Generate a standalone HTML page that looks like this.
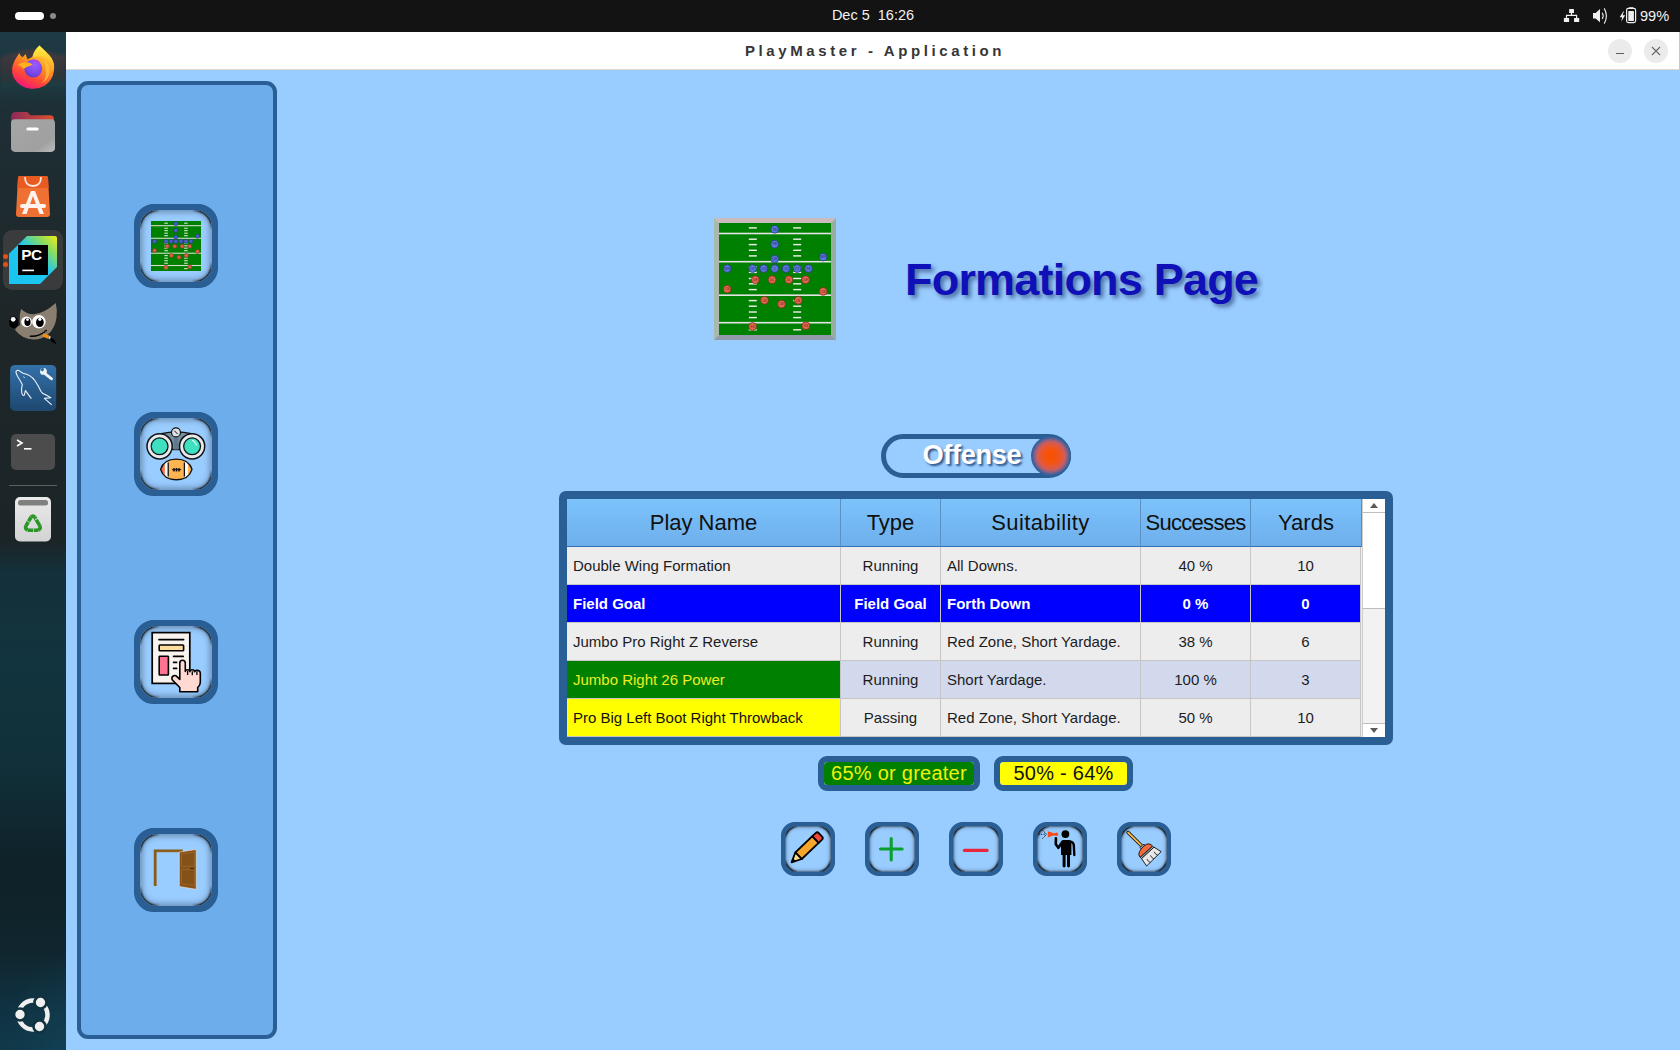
<!DOCTYPE html>
<html><head><meta charset="utf-8">
<style>
*{margin:0;padding:0;box-sizing:border-box}
html,body{width:1680px;height:1050px;overflow:hidden;background:#99ccff;font-family:"Liberation Sans",sans-serif}
.abs{position:absolute}
#topbar{left:0;top:0;width:1680px;height:32px;background:#131313}
#dock{left:0;top:32px;width:66px;height:1018px;background:radial-gradient(ellipse 60px 90px at 66px 1010px,rgba(20,70,90,.5),rgba(0,0,0,0)),linear-gradient(180deg,#1f3b46 0%,#1e2f35 8%,#1e2628 28%,#1b2527 50%,#14303a 53%,#12343e 62%,#113039 72%,#0f2129 82%,#10252d 90%,#0f3242 96%,#10394a 100%)}
#titlebar{left:66px;top:32px;width:1614px;height:38px;background:#fff;border-bottom:1px solid #ddd8d2}
#content{left:66px;top:70px;width:1614px;height:980px;background:#99ccff}
#sidebar{left:77px;top:81px;width:200px;height:958px;background:#6eadeb;border:4px solid #295f94;border-radius:11px}
.sbtn{position:absolute;width:84px;height:84px;border:6px solid #295f94;border-radius:20px;background:#99ccff}
.sbtn::before,.bbtn::before{content:'';position:absolute;left:0;top:0;right:0;bottom:0;border-radius:17px;box-shadow:0 0 0 6px #295f94,inset 0 0 6px 2px rgba(0,0,0,.33)}
.bbtn::before{border-radius:12px;box-shadow:0 0 0 4px #295f94,inset 0 0 2px 1px rgba(0,0,0,.45),inset 0 0 5px 1px rgba(0,0,0,.2)}
.sbtn::after,.bbtn::after{content:'';position:absolute;left:0;top:0;right:0;bottom:0;border-radius:17px;box-shadow:inset 0 0 2px 1.5px rgba(0,0,0,.85);-webkit-mask:linear-gradient(90deg,#000 12px,transparent 20px,transparent calc(100% - 20px),#000 calc(100% - 12px)),linear-gradient(180deg,#000 12px,transparent 20px,transparent calc(100% - 20px),#000 calc(100% - 12px));-webkit-mask-composite:source-in;mask-composite:intersect}
.bbtn::after{border-radius:12px;-webkit-mask:linear-gradient(90deg,#000 7px,transparent 13px,transparent calc(100% - 13px),#000 calc(100% - 7px)),linear-gradient(180deg,#000 7px,transparent 13px,transparent calc(100% - 13px),#000 calc(100% - 7px));-webkit-mask-composite:source-in;mask-composite:intersect}
.bbtn{position:absolute;top:822px;width:54px;height:54px;border:4px solid #295f94;border-radius:14px;background:#99ccff}
#title{left:905px;top:254px;font-size:45px;line-height:52px;letter-spacing:-.8px;font-weight:bold;color:#1010b8;text-shadow:3px 3px 4px rgba(30,50,100,.6);white-space:nowrap}
#toggle{left:881px;top:434px;width:190px;height:44px;border:5px solid #295f94;border-radius:22px}
#tbl{left:559px;top:491px;width:834px;height:254px;border:8px solid #295f94;border-radius:7px;background:#ededee;overflow:hidden}

.th{position:absolute;top:0;height:48px;border-right:1px solid #5c8fc2;border-bottom:1px solid #2f72b4;background:linear-gradient(180deg,#7cc3fb 0%,#74b8f3 55%,#6eafeb 100%);line-height:48px;text-align:center;font-size:22px;color:#101010;white-space:nowrap}
.td{position:absolute;height:38px;border-right:1px solid #c6c6c6;border-bottom:1px solid #c6c6c6;line-height:37px;font-size:15px;padding-left:6px;color:#1c1c1c;white-space:nowrap;overflow:hidden;background:#ededee}
.td.c{text-align:center;padding-left:0}
.td.sel{background:#0000ff;color:#fff;font-weight:bold}
.td.alt{background:#d3d9ed}
.td.g{background:#008000;color:#eeee22}
.td.y{background:#ffff00;color:#111}
#sb{position:absolute;left:795px;top:0;width:23px;height:238px;background:#f2f2f2;border-left:1px solid #d2cdc8}
#sb .up,#sb .dn{position:absolute;left:0;width:22px;height:14px;background:#fff}
#sb .up{top:0;border-bottom:1px solid #bdbdbd}
#sb .dn{bottom:0;border-top:1px solid #bdbdbd}
#sb .hd{position:absolute;left:0;top:14px;width:22px;height:96px;background:#fff;border-bottom:1px solid #bdbdbd}
#sb .tri{position:absolute;left:8px;width:0;height:0;border-left:4px solid transparent;border-right:4px solid transparent}

#clock{left:820px;top:7px;width:106px;text-align:center;color:#f2f2f2;font-size:14.5px;white-space:pre;line-height:16px}
#pct{left:1640px;top:8px;color:#f2f2f2;font-size:14.6px;line-height:16px}
#apptitle{left:745px;top:42px;color:#363636;font-size:15px;font-weight:bold;letter-spacing:3.6px;white-space:nowrap;line-height:17px}
.wbtn{position:absolute;top:39px;width:24px;height:24px;border-radius:50%;background:#ebebeb}
.di{position:absolute}

#offtxt{left:922.5px;top:440px;letter-spacing:-.35px;color:#fff;font-size:27.2px;font-weight:bold;text-shadow:2px 2px 2px rgba(20,50,100,.75);white-space:nowrap;line-height:30px}
#knob{left:1031px;top:436px;width:40px;height:40px;border-radius:50%;background:radial-gradient(circle closest-side,#f65000 0%,#f45310 33%,#e4583a 57%,#cc5d5c 70%,#8a6084 82%,#46609a 92%,#2a5f94 100%)}
.badge{position:absolute;top:756px;height:35px;border:6px solid #295f94;border-radius:9px;font-size:20px;text-align:center;line-height:23px;white-space:nowrap;letter-spacing:.25px}
</style></head>
<body>
<div id="topbar" class="abs">
<div class="abs" style="left:15px;top:12px;width:29px;height:8px;border-radius:4px;background:#fff"></div>
<div class="abs" style="left:50px;top:13px;width:6px;height:6px;border-radius:50%;background:#8a8a8a"></div>
<div id="clock" class="abs">Dec 5  16:26</div>
<svg class="abs" style="left:1555px;top:0" width="85" height="32" viewBox="1555 0 85 32">
<rect x="1569.1" y="8.9" width="4.9" height="4.1" rx=".6" fill="#f0f0f0"/><rect x="1563.9" y="17.9" width="5.2" height="4.1" rx=".6" fill="#f0f0f0"/><rect x="1574" y="17.9" width="5.2" height="4.1" rx=".6" fill="#f0f0f0"/>
<path d="M1571.5 13v2.3M1566.5 17.9v-2.6h10.1v2.6" stroke="#f0f0f0" stroke-width="1.2" fill="none"/>
<path d="M1593 13h2.6l4.4-4.1v13.4l-4.4-3.7H1593z" fill="#f0f0f0"/>
<path d="M1602.2 12.8q2 3 0 6.2M1604.2 8.4q4.4 7.6 0 15.2" stroke="#f0f0f0" stroke-width="1.1" fill="none"/>
<path d="M1623.4 11.2L1619.7 17.2h2.5l-1 4.4 4-6.4h-2.5l1.2-4z" fill="#f0f0f0"/>
<rect x="1626.6" y="8.4" width="9" height="14.2" rx="1.8" stroke="#f0f0f0" stroke-width="1.2" fill="none"/>
<rect x="1628.7" y="7.2" width="4.8" height="1.6" rx=".5" fill="#f0f0f0"/>
<rect x="1628.3" y="11.1" width="5.6" height="10" rx=".6" fill="#eeeeee"/>
</svg>
<div id="pct" class="abs">99%</div>
</div>
<div id="dock" class="abs">
<svg class="abs" style="left:0;top:0;filter:blur(1.5px)" width="66" height="140" viewBox="0 0 66 140">
<defs><linearGradient id="mtn" x1="0" y1="0" x2="0" y2="1"><stop offset="0" stop-color="#4a3c40" stop-opacity=".85"/><stop offset=".6" stop-color="#3a3538" stop-opacity=".75"/><stop offset="1" stop-color="#2a3a3c" stop-opacity=".5"/></linearGradient>
<linearGradient id="tl" x1="0" y1="0" x2="0" y2="1"><stop offset="0" stop-color="#1f4048" stop-opacity=".9"/><stop offset="1" stop-color="#1a2c30" stop-opacity="0"/></linearGradient></defs>
<path d="M0 26Q14 20 26 18 40 16 52 21 60 24 66 22V50Q40 47 0 52z" fill="url(#mtn)"/>
<path d="M0 52Q40 47 66 50V78Q40 74 0 80z" fill="url(#tl)"/>
</svg>
<!-- firefox -->
<svg class="di" style="left:0;top:10px" width="66" height="50" viewBox="0 42 66 50">
<defs>
<linearGradient id="ffb" x1=".75" y1=".1" x2=".3" y2="1"><stop offset="0" stop-color="#ffde3c"/><stop offset=".35" stop-color="#ff9a22"/><stop offset=".7" stop-color="#ff4a36"/><stop offset="1" stop-color="#f0127c"/></linearGradient>
<linearGradient id="ffy" x1=".5" y1="0" x2=".5" y2="1"><stop offset="0" stop-color="#fff044"/><stop offset="1" stop-color="#ffb428"/></linearGradient>
<radialGradient id="ffp" cx="60%" cy="30%" r="80%"><stop offset="0" stop-color="#9b5cff"/><stop offset=".6" stop-color="#7a48e8"/><stop offset="1" stop-color="#5b36c4"/></radialGradient>
</defs>
<path d="M14.6 60.5L19.4 53 21.5 58.5 25.6 53.9 27.5 59.5Q30 57.5 32.5 57L39.4 45.6Q45 51 49.2 55.3 55 61 54 70 53 80 45 85.5 38 89.5 31 88.7 20 87.5 14.5 79 11 72.5 12.5 66z" fill="url(#ffb)"/>
<path d="M32.3 57.2Q34 50 39.4 45.6 45 51 49.2 55.3 53.8 60.5 53.8 67 52 61 46.5 58 41 55.5 32.3 57.2z" fill="url(#ffy)"/>
<path d="M44 60q6 4 5.5 12-1 8-8 11.5 5-5 4.5-11.5-.3-6-2-12z" fill="#ffc43a" opacity=".75"/>
<circle cx="33.2" cy="68.6" r="9" fill="url(#ffp)"/>
<path d="M31.6 59.8q5-.8 8.8 2l-2.2-.2q-2 .8-.2 2.4z" fill="#b040f0"/>
<path d="M18 64.5q3-2 8-2.2 3.5 0 6.8 2.2l-2 1q-4 .8-6.8 3.2-2-.5-2.8-2.2-2.4-.4-3.2-2z" fill="#ffb21c"/>
<path d="M19.6 56q3 2 6 3.5" stroke="#ff9a18" stroke-width="1.2" fill="none"/>
</svg>
<!-- files -->
<svg class="di" style="left:10px;top:79px" width="45" height="41" viewBox="0 0 44 40">
<defs><linearGradient id="ftab" x1="0" x2="1"><stop offset="0" stop-color="#8c2a5a"/><stop offset="1" stop-color="#e0502a"/></linearGradient>
<linearGradient id="fbody" x1="0" y1="0" x2="1" y2="1"><stop offset="0" stop-color="#a6a6a6"/><stop offset=".75" stop-color="#a0a0a0"/><stop offset="1" stop-color="#bdbdbd"/></linearGradient></defs>
<path d="M1 6q0-5 5-5h11l3 3h19q4 0 4 4v10H1z" fill="url(#ftab)"/>
<rect x="1" y="8" width="43" height="32" rx="4" fill="url(#fbody)"/>
<rect x="16" y="16" width="12" height="3" rx="1.5" fill="#fff"/>
</svg>
<!-- app center -->
<svg class="di" style="left:15px;top:143px" width="36" height="42" viewBox="0 0 36 42">
<path d="M3 3q0-2 2-2h26q2 0 2 2l2 36q0 3-3 3H4q-3 0-3-3z" fill="#f07033"/>
<path d="M3 3q0-2 2-2h26q2 0 2 2l.6 10H2.4z" fill="#e95a20"/>
<path d="M10 2q0 9 8 9t8-9" stroke="#f5e6e0" stroke-width="1.8" fill="none"/>
<path d="M7 39L16 16h4l9 23h-4.5L18 21l-6.5 18z" fill="#fff3ee"/>
<rect x="5" y="29" width="26" height="4" rx="2" fill="#fff3ee"/>
</svg>
<!-- pycharm -->
<div class="abs" style="left:3px;top:198px;width:60px;height:60px;border-radius:9px;background:#3a3b3c"></div>
<div class="abs" style="left:3px;top:222px;width:5px;height:5px;border-radius:50%;background:#e2501e"></div>
<div class="abs" style="left:3px;top:230px;width:5px;height:5px;border-radius:50%;background:#e2501e"></div>
<svg class="di" style="left:9px;top:204px" width="48" height="48" viewBox="0 0 48 48">
<defs><linearGradient id="pcg" x1="0" y1="1" x2="1" y2="0"><stop offset="0" stop-color="#19c3f2"/><stop offset=".55" stop-color="#1fc8ee"/><stop offset=".8" stop-color="#8fdc5a"/><stop offset="1" stop-color="#f2ee18"/></linearGradient></defs>
<path d="M18 0H46Q48 0 48 2V31L31 48H0V17.7z" fill="url(#pcg)"/>
<rect x="9" y="9" width="30" height="30" fill="#000"/>
<text x="12.2" y="24.4" font-family="Liberation Sans" font-size="15.4" font-weight="bold" fill="#fff" letter-spacing="-.4">PC</text>
<rect x="13.3" y="33.6" width="11.7" height="1.6" fill="#fff"/>
</svg>
<!-- gimp -->
<svg class="di" style="left:0;top:266px" width="66" height="52" viewBox="0 298 66 52">
<path d="M21.1 309.1Q27 314.5 33.7 314.3 44 313.5 55.8 303 57.5 310 56.5 317.8 55 328 48.6 333.7 42 339.6 33.7 339.6 22 339 14.9 329.7 16 327 20 325 19 316 21.1 309.1z" fill="#8a7e70"/>
<ellipse cx="13.7" cy="322.3" rx="4.7" ry="5.9" fill="#000"/><circle cx="13.2" cy="319.3" r="2.4" fill="#fff"/>
<circle cx="26.6" cy="321.8" r="5.4" fill="#fff"/><ellipse cx="27.5" cy="322" rx="3.1" ry="3.9" fill="#000"/><circle cx="27.5" cy="319.6" r="1.4" fill="#fff"/>
<circle cx="38.9" cy="321.8" r="6.8" fill="#fff"/><ellipse cx="39.9" cy="322.4" rx="3.9" ry="4.6" fill="#000"/><circle cx="39.9" cy="319.3" r="1.6" fill="#fff"/>
<path d="M29.8 336.2Q38 337 45.3 331.5" stroke="#000" stroke-width="1.5" fill="none"/>
<path d="M44 331l2.6-1.4.5 1.8z" fill="#000"/>
<path d="M42.8 334.8l6 2.4" stroke="#f08c10" stroke-width="3.4"/>
<path d="M48.8 337.2l1.8.8" stroke="#c8d0d8" stroke-width="2.6"/>
<path d="M50.5 337.5q3 1 4.5 3.5t1.5 3.5q-3-1.5-5-3-1.5-1.5-1-4z" fill="#000"/>
</svg>
<!-- mysql -->
<svg class="di" style="left:0;top:328px" width="66" height="54" viewBox="0 360 66 54">
<defs><linearGradient id="myg" x1="0" y1="0" x2="0" y2="1"><stop offset="0" stop-color="#3371aa"/><stop offset="1" stop-color="#1d4870"/></linearGradient></defs>
<rect x="10.1" y="364.9" width="46.1" height="46" rx="5" fill="url(#myg)"/>
<path d="M15.8 372.1Q16.5 369.8 19 370.6L23 373.2Q31 374.5 35 380.8Q38.5 386 41 391.5Q42.5 394 45.3 394.6L50.8 397.8 44.3 398.4 51.8 404.8" stroke="#eef2f6" stroke-width="1.1" fill="none" stroke-linejoin="round"/>
<path d="M15.8 372.1Q17 376 19.5 379.5L22.3 384.5Q20.8 389.5 21.9 393.4Q23 396.3 24.3 395.2L25.4 390.6 31.4 398.6" stroke="#eef2f6" stroke-width="1.1" fill="none" stroke-linejoin="round"/>
<path d="M23.6 376.6l.9 1.2" stroke="#eef2f6" stroke-width="1"/>
<path d="M45 373.6l6.6 5.2" stroke="#eef2f6" stroke-width="2.8" stroke-linecap="round"/>
<circle cx="43.4" cy="371.4" r="3.4" fill="#eef2f6"/><path d="M40.2 370.2l2.6 1.2 1.4-1.8-1.5-2.8z" fill="#3170a6"/>
</svg>
<!-- terminal -->
<div class="abs" style="left:11px;top:402px;width:44px;height:36px;border-radius:5px;background:#4c4c4c"></div>
<svg class="di" style="left:15px;top:406px" width="20" height="14" viewBox="0 0 20 14"><path d="M2 2l5 3-5 3" stroke="#fff" stroke-width="1.6" fill="none"/><rect x="9" y="10" width="7.5" height="1.6" fill="#fff"/></svg>
<div class="abs" style="left:9px;top:453px;width:48px;height:1px;background:#5c5f60"></div>
<!-- trash -->
<svg class="di" style="left:15px;top:465px" width="36" height="45" viewBox="0 0 36 45">
<defs><linearGradient id="trg" x1="0" y1="0" x2="0" y2="1"><stop offset="0" stop-color="#eaeaea"/><stop offset="1" stop-color="#d3d3d3"/></linearGradient></defs>
<rect x="0" y="0" width="36" height="44.5" rx="5" fill="url(#trg)"/>
<rect x="3" y="3" width="30" height="5.5" rx="2.5" fill="#808080"/>
<g transform="translate(17.9 27.6)">
<path d="M1.8-7.6L6.9 1.2M5.2 5.6H-5.2M-6.9 1.2L-1.8-7.6" stroke="#2a9626" stroke-width="3.6" stroke-linecap="butt" fill="none"/>
<path d="M-1.8-7.6Q0-9.6 1.8-7.6M6.9 1.2Q8.2 4.2 5.2 5.6M-5.2 5.6Q-8.2 4.2-6.9 1.2" stroke="#2a9626" stroke-width="3.6" fill="none"/>
<path d="M2.2-4.6l2.8-1.6M1 3.6v3.8M-3.4-2l-3.2-1.8" stroke="#dadada" stroke-width="1.3" fill="none"/><path d="M2.2-4.6l1.6 3.2 1.4-4zM1 3.6l2.8 2-2.8 2zM-3.4-2l-3.6 1 .4-2.6z" fill="#2a9626"/>
</g></svg>
<!-- ubuntu -->
<svg class="di" style="left:14px;top:964px" width="38" height="38" viewBox="0 0 38 38">
<circle cx="19" cy="19" r="14.5" stroke="#f0f0f0" stroke-width="4.5" fill="none"/>
<g stroke="#11323f" stroke-width="2.6"><circle cx="6" cy="18.5" r="6" fill="#f0f0f0"/><circle cx="26.5" cy="6.5" r="6" fill="#f0f0f0"/><circle cx="25.5" cy="30.5" r="6" fill="#f0f0f0"/></g>
</svg>
</div>
<div id="titlebar" class="abs"></div>
<div id="apptitle" class="abs">PlayMaster - Application</div>
<div class="wbtn" style="left:1608px"><div class="abs" style="left:8px;top:14px;width:8px;height:1.3px;background:#5e5e5e"></div></div>
<div class="wbtn" style="left:1644px"><svg class="abs" style="left:6px;top:6px" width="12" height="12" viewBox="0 0 12 12"><path d="M2 2L10 10M10 2L2 10" stroke="#666" stroke-width="1.1"/></svg></div>
<div class="abs" style="left:1679px;top:32px;width:1px;height:38px;background:#c8c8c8"></div>
<div id="content" class="abs"></div>
<div id="sidebar" class="abs"></div>
<div class="sbtn" style="left:134px;top:204px"></div>
<svg class="abs" style="left:151px;top:221px" width="50" height="50" viewBox="0 0 112 112"><use href="#fld2" x="0" y="0" width="112" height="112"/></svg>
<div class="sbtn" style="left:134px;top:412px"></div>
<svg class="abs" style="left:134px;top:412px" width="84" height="84" viewBox="134 412 84 84">
<defs><clipPath id="fbc"><path d="M160.6 469.4C162.8 462.2 169 459.1 176.3 459.1S189.8 462.2 192 469.4C189.8 476.6 183.6 479.7 176.3 479.7S162.8 476.6 160.6 469.4z"/></clipPath></defs>
<path d="M161.5 433.6Q176 430 191.5 433.6L189 445 178.3 449.6H173.7L163 445z" fill="#7890a0" stroke="#111" stroke-width="1.2" stroke-linejoin="round"/>
<path d="M173.7 436h4.6v13.6h-4.6z" fill="#5f7a8c"/>
<circle cx="159.6" cy="446.3" r="12.6" fill="#e6eaee" stroke="#111" stroke-width="1.5"/>
<circle cx="159.6" cy="446.3" r="8.4" fill="#3ee0c0" stroke="#111" stroke-width="1.3"/>
<path d="M153.2 441.5a8 8 0 0 0 3.5 12.3 8.4 8.4 0 0 1-3.5-12.3z" fill="#14b896"/>
<circle cx="192.1" cy="446.3" r="12.6" fill="#e6eaee" stroke="#111" stroke-width="1.5"/>
<circle cx="192.1" cy="446.3" r="8.4" fill="#3ee0c0" stroke="#111" stroke-width="1.3"/>
<path d="M185.7 441.5a8 8 0 0 0 3.5 12.3 8.4 8.4 0 0 1-3.5-12.3z" fill="#14b896"/>
<path d="M192.6 440.4l.9.5M194.4 441.6l.6.8M195.8 443.4l.5 1.6" stroke="#fff" stroke-width="1.1" stroke-linecap="round"/>
<circle cx="176" cy="432.4" r="4.5" fill="#dde2e6" stroke="#111" stroke-width="1.2"/>
<path d="M174.3 430.7l3.4 3.4" stroke="#111" stroke-width="1"/>
<g clip-path="url(#fbc)">
<rect x="158" y="456" width="36" height="26" fill="#ffb452"/>
<path d="M158 456h7v26h-7z" fill="#f4744a"/>
<path d="M164.8 456h3.4v26h-3.4zM184.4 456h3.4v26h-3.4z" fill="#fff"/>
</g>
<path d="M168.2 462.4v14M184.4 462.4v14" stroke="#111" stroke-width="1.3"/>
<path d="M160.6 469.4C162.8 462.2 169 459.1 176.3 459.1S189.8 462.2 192 469.4C189.8 476.6 183.6 479.7 176.3 479.7S162.8 476.6 160.6 469.4z" fill="none" stroke="#111" stroke-width="1.4"/>
<path d="M172 469.7h9.2" stroke="#111" stroke-width="1"/>
<path d="M174 468v3.4M176.5 468v3.4M179 468v3.4" stroke="#111" stroke-width="1.5"/>
</svg>
<div class="sbtn" style="left:134px;top:620px"></div>
<svg class="abs" style="left:134px;top:620px" width="84" height="84" viewBox="134 620 84 84">
<rect x="152.2" y="632.6" width="37.6" height="50.8" fill="#f8f3ef" stroke="#000" stroke-width="1.7"/>
<path d="M159 639.6h24.6" stroke="#000" stroke-width="1.7" stroke-linecap="round"/>
<rect x="159.2" y="645" width="24.4" height="5.8" rx=".8" fill="#fddc9e" stroke="#000" stroke-width="1.6"/>
<rect x="159.2" y="656.2" width="9.2" height="18.8" rx=".6" fill="#ff7391" stroke="#000" stroke-width="1.6"/>
<path d="M173.6 656.4h9.6M173.6 662.4h3M173.6 668.4h3" stroke="#000" stroke-width="1.7" stroke-linecap="round"/>
<path d="M179.8 691.7V687.5L172.6 680.2Q170.8 677.6 173.2 676Q175.2 674.8 177 676.6L179.8 679.4V663Q179.8 660.2 182.5 660.2T185.3 663V671.4Q185.5 669.8 187.6 669.8Q189.6 669.8 189.9 671.6Q190.4 669.8 192.3 669.8Q194.3 669.8 194.6 671.8Q195.1 670.4 196.9 670.4Q200.3 670.4 200.3 673.6V682.4Q200.3 685 197.7 687.6V691.7z" fill="#ffd9d2" stroke="#000" stroke-width="1.6" stroke-linejoin="round"/>
<path d="M187.6 671v4M192.3 671.2v4M196.9 671.5v3.6" stroke="#000" stroke-width="1.3"/>
</svg>
<div class="sbtn" style="left:134px;top:828px"></div>
<svg class="abs" style="left:134px;top:828px" width="84" height="84" viewBox="134 828 84 84">
<path d="M153.8 849.4h29v2.6h-26.2V886h-2.8z" fill="#8a5a1c"/>
<path d="M157 852h22" stroke="#a87038" stroke-width=".8" stroke-dasharray="1.5 1.2"/>
<path d="M179.3 852l16.9-2.5V889.3l-16.9-2.8z" fill="#8a5216" stroke="#fff6e0" stroke-width=".5"/>
<path d="M181.5 854l13-1.8v14l-13 .2z" fill="#835218" stroke="#9c6a32" stroke-width=".7"/>
<path d="M181.5 869.5l13 .3v15.7l-13-1.8z" fill="#835218" stroke="#9c6a32" stroke-width=".7"/>
<path d="M190.5 868.5h3" stroke="#2a1a08" stroke-width="1.1"/>
</svg>
<div id="title" class="abs">Formations Page</div>
<div id="toggle" class="abs"></div>
<div id="knob" class="abs"></div>
<div id="offtxt" class="abs">Offense</div>
<svg class="abs" style="left:714px;top:218px" width="122" height="122" viewBox="0 0 122 122">
<defs><symbol id="fld" viewBox="0 0 112 112"><rect x="0" y="0" width="112" height="112" fill="#008000"/>
<rect x="0" y="9.7" width="112" height="1.6" fill="#e4e4e4"/>
<rect x="0" y="37.9" width="112" height="1.6" fill="#e4e4e4"/>
<rect x="0" y="71.4" width="112" height="1.6" fill="#e4e4e4"/>
<rect x="0" y="98.9" width="112" height="1.6" fill="#e4e4e4"/>
<rect x="29.8" y="4.2" width="8" height="1.4" fill="#f0f0f0"/>
<rect x="74.2" y="4.2" width="8" height="1.4" fill="#f0f0f0"/>
<rect x="29.8" y="15.5" width="8" height="1.4" fill="#f0f0f0"/>
<rect x="74.2" y="15.5" width="8" height="1.4" fill="#f0f0f0"/>
<rect x="29.8" y="20.9" width="8" height="1.4" fill="#f0f0f0"/>
<rect x="74.2" y="20.9" width="8" height="1.4" fill="#f0f0f0"/>
<rect x="29.8" y="26.6" width="8" height="1.4" fill="#f0f0f0"/>
<rect x="74.2" y="26.6" width="8" height="1.4" fill="#f0f0f0"/>
<rect x="29.8" y="32.2" width="8" height="1.4" fill="#f0f0f0"/>
<rect x="74.2" y="32.2" width="8" height="1.4" fill="#f0f0f0"/>
<rect x="29.8" y="43.3" width="8" height="1.4" fill="#f0f0f0"/>
<rect x="74.2" y="43.3" width="8" height="1.4" fill="#f0f0f0"/>
<rect x="29.8" y="48.7" width="8" height="1.4" fill="#f0f0f0"/>
<rect x="74.2" y="48.7" width="8" height="1.4" fill="#f0f0f0"/>
<rect x="29.8" y="54.8" width="8" height="1.4" fill="#f0f0f0"/>
<rect x="74.2" y="54.8" width="8" height="1.4" fill="#f0f0f0"/>
<rect x="29.8" y="60.1" width="8" height="1.4" fill="#f0f0f0"/>
<rect x="74.2" y="60.1" width="8" height="1.4" fill="#f0f0f0"/>
<rect x="29.8" y="65.9" width="8" height="1.4" fill="#f0f0f0"/>
<rect x="74.2" y="65.9" width="8" height="1.4" fill="#f0f0f0"/>
<rect x="29.8" y="76.9" width="8" height="1.4" fill="#f0f0f0"/>
<rect x="74.2" y="76.9" width="8" height="1.4" fill="#f0f0f0"/>
<rect x="29.8" y="82.5" width="8" height="1.4" fill="#f0f0f0"/>
<rect x="74.2" y="82.5" width="8" height="1.4" fill="#f0f0f0"/>
<rect x="29.8" y="88.3" width="8" height="1.4" fill="#f0f0f0"/>
<rect x="74.2" y="88.3" width="8" height="1.4" fill="#f0f0f0"/>
<rect x="29.8" y="93.9" width="8" height="1.4" fill="#f0f0f0"/>
<rect x="74.2" y="93.9" width="8" height="1.4" fill="#f0f0f0"/>
<rect x="29.8" y="106.1" width="8" height="1.4" fill="#f0f0f0"/>
<rect x="74.2" y="106.1" width="8" height="1.4" fill="#f0f0f0"/>
<circle cx="55.7" cy="6.3" r="3.9" fill="#5a78d8" stroke="#23357a" stroke-width=".7"/>
<circle cx="55.7" cy="21.2" r="3.9" fill="#5a78d8" stroke="#23357a" stroke-width=".7"/>
<circle cx="55.7" cy="36.1" r="3.9" fill="#5a78d8" stroke="#23357a" stroke-width=".7"/>
<circle cx="104.1" cy="34.1" r="3.9" fill="#5a78d8" stroke="#23357a" stroke-width=".7"/>
<circle cx="8.1" cy="45.6" r="3.9" fill="#5a78d8" stroke="#23357a" stroke-width=".7"/>
<circle cx="33.6" cy="45.6" r="3.9" fill="#5a78d8" stroke="#23357a" stroke-width=".7"/>
<circle cx="44.7" cy="45.6" r="3.9" fill="#5a78d8" stroke="#23357a" stroke-width=".7"/>
<circle cx="55.7" cy="45.6" r="3.9" fill="#5a78d8" stroke="#23357a" stroke-width=".7"/>
<circle cx="67.1" cy="45.6" r="3.9" fill="#5a78d8" stroke="#23357a" stroke-width=".7"/>
<circle cx="78.2" cy="45.6" r="3.9" fill="#5a78d8" stroke="#23357a" stroke-width=".7"/>
<circle cx="89.5" cy="45.6" r="3.9" fill="#5a78d8" stroke="#23357a" stroke-width=".7"/>
<circle cx="36.3" cy="56.7" r="3.9" fill="#dc6a50" stroke="#7a2a1a" stroke-width=".7"/>
<circle cx="53.1" cy="56.7" r="3.9" fill="#dc6a50" stroke="#7a2a1a" stroke-width=".7"/>
<circle cx="69.8" cy="56.7" r="3.9" fill="#dc6a50" stroke="#7a2a1a" stroke-width=".7"/>
<circle cx="86.6" cy="56.7" r="3.9" fill="#dc6a50" stroke="#7a2a1a" stroke-width=".7"/>
<circle cx="8.1" cy="66.1" r="3.9" fill="#dc6a50" stroke="#7a2a1a" stroke-width=".7"/>
<circle cx="104.1" cy="68.4" r="3.9" fill="#dc6a50" stroke="#7a2a1a" stroke-width=".7"/>
<circle cx="45.5" cy="77.3" r="3.9" fill="#dc6a50" stroke="#7a2a1a" stroke-width=".7"/>
<circle cx="62.5" cy="81.1" r="3.9" fill="#dc6a50" stroke="#7a2a1a" stroke-width=".7"/>
<circle cx="79.3" cy="77.3" r="3.9" fill="#dc6a50" stroke="#7a2a1a" stroke-width=".7"/>
<circle cx="33.6" cy="103.5" r="3.9" fill="#dc6a50" stroke="#7a2a1a" stroke-width=".7"/>
<circle cx="86.9" cy="102.7" r="3.9" fill="#dc6a50" stroke="#7a2a1a" stroke-width=".7"/><text x="55.7" y="7.5" font-size="3.4" font-family="Liberation Sans" text-anchor="middle" fill="#1a2a70">TB</text>
<text x="55.7" y="22.4" font-size="3.4" font-family="Liberation Sans" text-anchor="middle" fill="#1a2a70">FB</text>
<text x="55.7" y="37.3" font-size="3.4" font-family="Liberation Sans" text-anchor="middle" fill="#1a2a70">QB</text>
<text x="104.1" y="35.3" font-size="3.4" font-family="Liberation Sans" text-anchor="middle" fill="#1a2a70">WR</text>
<text x="8.1" y="46.8" font-size="3.4" font-family="Liberation Sans" text-anchor="middle" fill="#1a2a70">WR</text>
<text x="33.6" y="46.8" font-size="3.4" font-family="Liberation Sans" text-anchor="middle" fill="#1a2a70">OT</text>
<text x="44.7" y="46.8" font-size="3.4" font-family="Liberation Sans" text-anchor="middle" fill="#1a2a70">OG</text>
<text x="55.7" y="46.8" font-size="3.4" font-family="Liberation Sans" text-anchor="middle" fill="#1a2a70">C</text>
<text x="67.1" y="46.8" font-size="3.4" font-family="Liberation Sans" text-anchor="middle" fill="#1a2a70">OG</text>
<text x="78.2" y="46.8" font-size="3.4" font-family="Liberation Sans" text-anchor="middle" fill="#1a2a70">OT</text>
<text x="89.5" y="46.8" font-size="3.4" font-family="Liberation Sans" text-anchor="middle" fill="#1a2a70">TE</text>
<text x="36.3" y="57.9" font-size="3.4" font-family="Liberation Sans" text-anchor="middle" fill="#7a2010">DE</text>
<text x="53.1" y="57.9" font-size="3.4" font-family="Liberation Sans" text-anchor="middle" fill="#7a2010">DL</text>
<text x="69.8" y="57.9" font-size="3.4" font-family="Liberation Sans" text-anchor="middle" fill="#7a2010">DL</text>
<text x="86.6" y="57.9" font-size="3.4" font-family="Liberation Sans" text-anchor="middle" fill="#7a2010">DE</text>
<text x="8.1" y="67.3" font-size="3.4" font-family="Liberation Sans" text-anchor="middle" fill="#7a2010">CB</text>
<text x="104.1" y="69.6" font-size="3.4" font-family="Liberation Sans" text-anchor="middle" fill="#7a2010">CB</text>
<text x="45.5" y="78.5" font-size="3.4" font-family="Liberation Sans" text-anchor="middle" fill="#7a2010">LB</text>
<text x="62.5" y="82.3" font-size="3.4" font-family="Liberation Sans" text-anchor="middle" fill="#7a2010">LB</text>
<text x="79.3" y="78.5" font-size="3.4" font-family="Liberation Sans" text-anchor="middle" fill="#7a2010">LB</text>
<text x="33.6" y="104.7" font-size="3.4" font-family="Liberation Sans" text-anchor="middle" fill="#7a2010">FS</text>
<text x="86.9" y="103.9" font-size="3.4" font-family="Liberation Sans" text-anchor="middle" fill="#7a2010">SS</text></symbol><symbol id="fld2" viewBox="0 0 112 112"><rect x="0" y="0" width="112" height="112" fill="#008000"/>
<rect x="0" y="9.3" width="112" height="2.4" fill="#d8dcd0"/>
<rect x="0" y="37.5" width="112" height="2.4" fill="#d8dcd0"/>
<rect x="0" y="71.0" width="112" height="2.4" fill="#d8dcd0"/>
<rect x="0" y="98.5" width="112" height="2.4" fill="#d8dcd0"/>
<rect x="29.8" y="3.8" width="8" height="2.2" fill="#e8ece0"/>
<rect x="74.2" y="3.8" width="8" height="2.2" fill="#e8ece0"/>
<rect x="29.8" y="15.1" width="8" height="2.2" fill="#e8ece0"/>
<rect x="74.2" y="15.1" width="8" height="2.2" fill="#e8ece0"/>
<rect x="29.8" y="20.5" width="8" height="2.2" fill="#e8ece0"/>
<rect x="74.2" y="20.5" width="8" height="2.2" fill="#e8ece0"/>
<rect x="29.8" y="26.2" width="8" height="2.2" fill="#e8ece0"/>
<rect x="74.2" y="26.2" width="8" height="2.2" fill="#e8ece0"/>
<rect x="29.8" y="31.8" width="8" height="2.2" fill="#e8ece0"/>
<rect x="74.2" y="31.8" width="8" height="2.2" fill="#e8ece0"/>
<rect x="29.8" y="42.9" width="8" height="2.2" fill="#e8ece0"/>
<rect x="74.2" y="42.9" width="8" height="2.2" fill="#e8ece0"/>
<rect x="29.8" y="48.3" width="8" height="2.2" fill="#e8ece0"/>
<rect x="74.2" y="48.3" width="8" height="2.2" fill="#e8ece0"/>
<rect x="29.8" y="54.4" width="8" height="2.2" fill="#e8ece0"/>
<rect x="74.2" y="54.4" width="8" height="2.2" fill="#e8ece0"/>
<rect x="29.8" y="59.7" width="8" height="2.2" fill="#e8ece0"/>
<rect x="74.2" y="59.7" width="8" height="2.2" fill="#e8ece0"/>
<rect x="29.8" y="65.5" width="8" height="2.2" fill="#e8ece0"/>
<rect x="74.2" y="65.5" width="8" height="2.2" fill="#e8ece0"/>
<rect x="29.8" y="76.5" width="8" height="2.2" fill="#e8ece0"/>
<rect x="74.2" y="76.5" width="8" height="2.2" fill="#e8ece0"/>
<rect x="29.8" y="82.1" width="8" height="2.2" fill="#e8ece0"/>
<rect x="74.2" y="82.1" width="8" height="2.2" fill="#e8ece0"/>
<rect x="29.8" y="87.9" width="8" height="2.2" fill="#e8ece0"/>
<rect x="74.2" y="87.9" width="8" height="2.2" fill="#e8ece0"/>
<rect x="29.8" y="93.5" width="8" height="2.2" fill="#e8ece0"/>
<rect x="74.2" y="93.5" width="8" height="2.2" fill="#e8ece0"/>
<rect x="29.8" y="105.7" width="8" height="2.2" fill="#e8ece0"/>
<rect x="74.2" y="105.7" width="8" height="2.2" fill="#e8ece0"/>
<circle cx="55.7" cy="6.3" r="4.6" fill="#4a5ed0" stroke="#22307a" stroke-width="1.2"/>
<circle cx="55.7" cy="21.2" r="4.6" fill="#4a5ed0" stroke="#22307a" stroke-width="1.2"/>
<circle cx="55.7" cy="36.1" r="4.6" fill="#4a5ed0" stroke="#22307a" stroke-width="1.2"/>
<circle cx="104.1" cy="34.1" r="4.6" fill="#4a5ed0" stroke="#22307a" stroke-width="1.2"/>
<circle cx="8.1" cy="45.6" r="4.6" fill="#4a5ed0" stroke="#22307a" stroke-width="1.2"/>
<circle cx="33.6" cy="45.6" r="4.6" fill="#4a5ed0" stroke="#22307a" stroke-width="1.2"/>
<circle cx="44.7" cy="45.6" r="4.6" fill="#4a5ed0" stroke="#22307a" stroke-width="1.2"/>
<circle cx="55.7" cy="45.6" r="4.6" fill="#4a5ed0" stroke="#22307a" stroke-width="1.2"/>
<circle cx="67.1" cy="45.6" r="4.6" fill="#4a5ed0" stroke="#22307a" stroke-width="1.2"/>
<circle cx="78.2" cy="45.6" r="4.6" fill="#4a5ed0" stroke="#22307a" stroke-width="1.2"/>
<circle cx="89.5" cy="45.6" r="4.6" fill="#4a5ed0" stroke="#22307a" stroke-width="1.2"/>
<circle cx="36.3" cy="56.7" r="4.6" fill="#d86048" stroke="#8a3020" stroke-width="1.2"/>
<circle cx="53.1" cy="56.7" r="4.6" fill="#d86048" stroke="#8a3020" stroke-width="1.2"/>
<circle cx="69.8" cy="56.7" r="4.6" fill="#d86048" stroke="#8a3020" stroke-width="1.2"/>
<circle cx="86.6" cy="56.7" r="4.6" fill="#d86048" stroke="#8a3020" stroke-width="1.2"/>
<circle cx="8.1" cy="66.1" r="4.6" fill="#d86048" stroke="#8a3020" stroke-width="1.2"/>
<circle cx="104.1" cy="68.4" r="4.6" fill="#d86048" stroke="#8a3020" stroke-width="1.2"/>
<circle cx="45.5" cy="77.3" r="4.6" fill="#d86048" stroke="#8a3020" stroke-width="1.2"/>
<circle cx="62.5" cy="81.1" r="4.6" fill="#d86048" stroke="#8a3020" stroke-width="1.2"/>
<circle cx="79.3" cy="77.3" r="4.6" fill="#d86048" stroke="#8a3020" stroke-width="1.2"/>
<circle cx="33.6" cy="103.5" r="4.6" fill="#d86048" stroke="#8a3020" stroke-width="1.2"/>
<circle cx="86.9" cy="102.7" r="4.6" fill="#d86048" stroke="#8a3020" stroke-width="1.2"/></symbol></defs>
<path d="M0 0H122L117 5H5z" fill="#cbbbbd"/><path d="M0 0L5 5V117L0 122z" fill="#a9b9ab"/><path d="M122 0V122L117 117V5z" fill="#9aac9c"/><path d="M0 122L5 117H117L122 122z" fill="#9299a8"/>
<use href="#fld" x="5" y="5" width="112" height="112"/>
</svg>
<div class="badge" style="left:818px;width:162px"><div style="position:absolute;left:0;top:0;right:0;bottom:0;background:#008000;border-radius:4px;color:#f2f20a">65% or greater</div></div>
<div class="badge" style="left:994px;width:139px"><div style="position:absolute;left:0;top:0;right:0;bottom:0;background:#ffff00;border-radius:4px;color:#111">50% - 64%</div></div>
<div id="tbl" class="abs">
<div class="th" style="left:0px;width:274px">Play Name</div>
<div class="th" style="left:274px;width:100px">Type</div>
<div class="th" style="left:374px;width:200px;letter-spacing:.4px">Suitability</div>
<div class="th" style="left:574px;width:110px;letter-spacing:-.7px">Successes</div>
<div class="th" style="left:684px;width:111px;border-right-color:#3d95e6">Yards</div>
<div class="td" style="left:0px;top:48px;width:274px">Double Wing Formation</div>
<div class="td c" style="left:274px;top:48px;width:100px">Running</div>
<div class="td" style="left:374px;top:48px;width:200px">All Downs.</div>
<div class="td c" style="left:574px;top:48px;width:110px">40 %</div>
<div class="td c" style="left:684px;top:48px;width:110px">10</div>
<div class="td sel" style="left:0px;top:86px;width:274px">Field Goal</div>
<div class="td sel c" style="left:274px;top:86px;width:100px">Field Goal</div>
<div class="td sel" style="left:374px;top:86px;width:200px">Forth Down</div>
<div class="td sel c" style="left:574px;top:86px;width:110px">0 %</div>
<div class="td sel c" style="left:684px;top:86px;width:110px">0</div>
<div class="td" style="left:0px;top:124px;width:274px">Jumbo Pro Right Z Reverse</div>
<div class="td c" style="left:274px;top:124px;width:100px">Running</div>
<div class="td" style="left:374px;top:124px;width:200px">Red Zone, Short Yardage.</div>
<div class="td c" style="left:574px;top:124px;width:110px">38 %</div>
<div class="td c" style="left:684px;top:124px;width:110px">6</div>
<div class="td g" style="left:0px;top:162px;width:274px">Jumbo Right 26 Power</div>
<div class="td alt c" style="left:274px;top:162px;width:100px">Running</div>
<div class="td alt" style="left:374px;top:162px;width:200px">Short Yardage.</div>
<div class="td alt c" style="left:574px;top:162px;width:110px">100 %</div>
<div class="td alt c" style="left:684px;top:162px;width:110px">3</div>
<div class="td y" style="left:0px;top:200px;width:274px">Pro Big Left Boot Right Throwback</div>
<div class="td c" style="left:274px;top:200px;width:100px">Passing</div>
<div class="td" style="left:374px;top:200px;width:200px">Red Zone, Short Yardage.</div>
<div class="td c" style="left:574px;top:200px;width:110px">50 %</div>
<div class="td c" style="left:684px;top:200px;width:110px">10</div>
<div id="sb"><div class="up"><div class="tri" style="top:4px;left:7px;border-bottom:5px solid #5a5a5a"></div></div><div class="hd"></div><div class="dn"><div class="tri" style="top:4px;left:7px;border-top:5px solid #5a5a5a"></div></div></div></div>
<div class="bbtn" style="left:781px"></div>
<svg class="abs" style="left:781px;top:822px" width="54" height="54" viewBox="781 822 54 54">
<g transform="translate(791.6 862.3) rotate(-43.6)" stroke="#000" stroke-width="1.8" stroke-linejoin="round">
<path d="M9.6-4.6H33V4.6H9.6z" fill="#f6a62a"/>
<path d="M33-4.6H37.6Q39.8-4.6 39.8-2.4V2.4Q39.8 4.6 37.6 4.6H33z" fill="#f4483a"/>
<path d="M0 0L9.6-4.6V4.6z" fill="#fbd98a"/>
<path d="M0 0L3.4-1.6V1.6z" fill="#000" stroke-width="1"/>
</g></svg>
<div class="bbtn" style="left:865px"></div>
<svg class="abs" style="left:865px;top:822px" width="54" height="54" viewBox="865 822 54 54">
<path d="M891.2 838.5v21.5M880.5 849h21.6" stroke="#0aa030" stroke-width="3.1" stroke-linecap="round"/></svg>
<div class="bbtn" style="left:949px"></div>
<svg class="abs" style="left:949px;top:822px" width="54" height="54" viewBox="949 822 54 54">
<path d="M964.5 850.4h22.5" stroke="#e8263a" stroke-width="3.4" stroke-linecap="round"/></svg>
<div class="bbtn" style="left:1033px"></div>
<svg class="abs" style="left:1033px;top:822px" width="54" height="54" viewBox="1033 822 54 54">
<circle cx="1065.4" cy="834.1" r="3.9" fill="#000"/>
<path d="M1063.4 840h5.6q2.4 0 2.4 2.4V855h-1.4v11q0 1.4-1.5 1.4t-1.5-1.4V855h-1.4v11q0 1.4-1.5 1.4t-1.5-1.4V855h-1.6V842.4q0-2.4 2.4-2.4z" fill="#000"/>
<path d="M1070.6 841.6q2.8.6 3.2 3.4l.5 10" stroke="#000" stroke-width="2.4" stroke-linecap="round" fill="none"/>
<path d="M1061.8 842.6l-3.4 5.2-2.6-3.6.1-6" stroke="#000" stroke-width="2.6" stroke-linecap="round" stroke-linejoin="round" fill="none"/>
<path d="M1047.9 831.3L1053.2 833v2.5L1047.9 837.4z" fill="#ff4a14"/>
<path d="M1053 833.2h1.9a1.6 1.6 0 0 1 0 2.2H1053z" fill="#ff4a14"/>
<circle cx="1056.4" cy="834.3" r="1.7" fill="#ff4a14"/>
<path d="M1038.6 834.3h7.4" stroke="#000" stroke-width="1" stroke-dasharray="1.1 1.4"/>
<path d="M1042.3 830l4.3 4.3-4.3 4.4" stroke="#000" stroke-width=".8" stroke-dasharray="1.6 .6" fill="none"/>
</svg>
<div class="bbtn" style="left:1117px"></div>
<svg class="abs" style="left:1117px;top:822px" width="54" height="54" viewBox="1117 822 54 54">
<path d="M1128.1 832.5l13.1 12.9" stroke="#000" stroke-width="3.4" stroke-linecap="round"/>
<path d="M1128.1 832.5l13.1 12.9" stroke="#ffbb55" stroke-width="1.8" stroke-linecap="round"/>
<path d="M1140 847.6l3-3q1.2-.4 1.9.4.8.7.4 1.9l-3 3z" fill="#a9b3b6" stroke="#000" stroke-width=".8"/>
<path d="M1140 857.3q-2.2-2.4-.6-5.6 1.4-2.8 4.4-5.6 2.8-2.6 5.4-2.2 2 .4 3.3 2.2z" fill="#f06a3c" stroke="#000" stroke-width=".8" stroke-linejoin="round"/>
<path d="M1140.4 857.6l12.4-11.4 1.2 1-12.4 11.4z" fill="#aab4b8" stroke="#000" stroke-width=".6"/>
<path d="M1141.6 858.6l12.4-11.4 7.2 4.4-14.6 14.4z" fill="#e8e8e8" stroke="#000" stroke-width=".85" stroke-linejoin="round"/>
<path d="M1150.3 862.4q-2.6-1-3.4-3.4M1153.9 858.8q-2.6-1-3.4-3.4M1157.6 855.2q-2.6-1-3.4-3.4" stroke="#000" stroke-width=".75" fill="none"/>
</svg>
</body></html>
